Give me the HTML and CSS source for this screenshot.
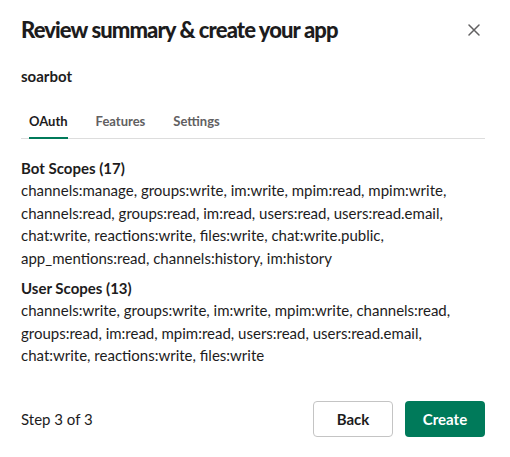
FILE: index.html
```html
<!DOCTYPE html>
<html>
<head>
<meta charset="utf-8">
<link rel="stylesheet" href="styles.css">
</head>
<body>
<div class="modal">
  <div class="header">
    <h1 class="title">Review summary &amp; create your app</h1>
    <button class="close" aria-label="Close">
      <svg width="12" height="12" viewBox="0 0 12 12"><path d="M1 1 L11 11 M11 1 L1 11" stroke="#616061" stroke-width="1.5" stroke-linecap="round" fill="none"/></svg>
    </button>
  </div>
  <div class="app-name">soarbot</div>
  <div class="tabs">
    <div class="tab active">OAuth</div>
    <div class="tab">Features</div>
    <div class="tab">Settings</div>
  </div>
  <div class="section first">
    <div class="sec-title">Bot Scopes (17)</div>
    <div class="sec-body">channels:manage, groups:write, im:write, mpim:read, mpim:write, channels:read, groups:read, im:read, users:read, users:read.email, chat:write, reactions:write, files:write, chat:write.public, app_mentions:read, channels:history, im:history</div>
  </div>
  <div class="section">
    <div class="sec-title">User Scopes (13)</div>
    <div class="sec-body">channels:write, groups:write, im:write, mpim:write, channels:read, groups:read, im:read, mpim:read, users:read, users:read.email, chat:write, reactions:write, files:write</div>
  </div>
  <div class="footer">
    <div class="step">Step 3 of 3</div>
    <div class="buttons">
      <button class="btn back">Back</button>
      <button class="btn create">Create</button>
    </div>
  </div>
</div>
</body>
</html>
```

FILE: styles.css
```css
* { box-sizing: border-box; }
html, body { margin: 0; padding: 0; background: #fff; }
body {
  font-family: Lato, "Liberation Sans", sans-serif;
  color: #1d1c1d;
  width: 510px;
  height: 457px;
  overflow: hidden;
}
.modal {
  padding: 16px 25px 0 21px;
}
.header {
  display: flex;
  align-items: center;
  justify-content: space-between;
  height: 28px;
}
.title {
  margin: 0;
  font-size: 22px;
  line-height: 28px;
  font-weight: 900;
  letter-spacing: -0.9px;
}
.close {
  border: 0;
  background: none;
  padding: 0;
  width: 12px;
  height: 12px;
  margin-right: 5px;
  display: flex;
}
.app-name {
  margin-top: 21px;
  font-size: 15px;
  line-height: 22px;
  font-weight: 700;
}
.tabs {
  display: flex;
  gap: 28px;
  padding-left: 8px;
  margin-top: 23px;
  box-shadow: inset 0 -1px 0 #dddddd;
}
.tab {
  font-size: 13px;
  line-height: 22px;
  font-weight: 700;
  color: #616061;
  padding-bottom: 5px;
  border-bottom: 2px solid transparent;
}
.tab.active {
  color: #1d1c1d;
  border-bottom-color: #007a5a;
}
.section.first { margin-top: 18px; }
.section { margin-top: 8px; }
.sec-title {
  font-size: 15px;
  line-height: 22px;
  font-weight: 700;
}
.sec-body {
  font-size: 15px;
  line-height: 22.5px;
  padding-right: 4px;
}
.footer {
  display: flex;
  align-items: center;
  justify-content: space-between;
  margin-top: 34px;
}
.step {
  font-size: 15px;
  line-height: 22px;
}
.buttons {
  display: flex;
  gap: 12px;
}
.btn {
  font-family: Lato, "Liberation Sans", sans-serif;
  font-size: 15px;
  font-weight: 700;
  height: 36px;
  width: 80px;
  border-radius: 4px;
  padding: 0;
}
.back {
  background: #fff;
  color: #1d1c1d;
  border: 1px solid #c4c4c4;
}
.create {
  background: #007a5a;
  color: #fff;
  border: 0;
}
```
